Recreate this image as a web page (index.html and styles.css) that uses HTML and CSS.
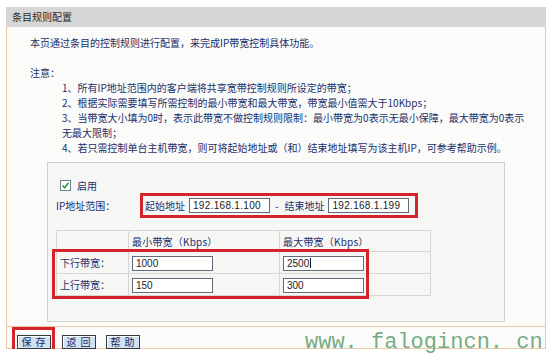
FILE: index.html
```html
<!DOCTYPE html>
<html>
<head>
    <meta charset="UTF-8">
    <title>条目规则配置</title>
    <link rel="stylesheet" href="styles.css">
</head>
<body>
    <div class="frame">
        <div class="title">条目规则配置</div>
        <div class="content">
            <p class="intro">本页通过条目的控制规则进行配置，来完成IP带宽控制具体功能。</p>
            <p class="note">注意：</p>
            <ul class="notes">
                <li>1、所有IP地址范围内的客户端将共享宽带控制规则所设定的带宽；</li>
                <li>2、根据实际需要填写所需控制的最小带宽和最大带宽，带宽最小值需大于10Kbps；</li>
                <li>3、当带宽大小填为0时，表示此带宽不做控制规则限制：最小带宽为0表示无最小保障，最大带宽为0表示<br>无最大限制；</li>
                <li>4、若只需控制单台主机带宽，则可将起始地址或（和）结束地址填写为该主机IP，可参考帮助示例。</li>
            </ul>
            <div class="panel">
                <div class="enable">
                    <span class="check">
                        <svg width="9" height="9" viewBox="0 0 9 9"><path d="M1.5 4.5 L3.6 6.8 L7.6 1.8" fill="none" stroke="#2f9a3a" stroke-width="1.6"/></svg>
                    </span>
                    <span>启用</span>
                </div>
                <div class="range-row">
                    <span class="range-label">IP地址范围：</span>
                    <span class="range">
                        <span class="word">起始地址</span>
                        <span class="field ip">192.168.1.100</span>
                        <span class="dash">-</span>
                        <span class="word">结束地址</span>
                        <span class="field ip">192.168.1.199</span>
                    </span>
                </div>
                <div class="bw">
                    <table>
                        <tr>
                            <th class="c1"></th>
                            <th class="c2">最小带宽（Kbps）</th>
                            <th class="c3">最大带宽（Kbps）</th>
                        </tr>
                        <tr>
                            <td class="c1">下行带宽：</td>
                            <td class="c2"><span class="field num">1000</span></td>
                            <td class="c3"><span class="field num">2500<i class="caret"></i></span></td>
                        </tr>
                        <tr>
                            <td class="c1">上行带宽：</td>
                            <td class="c2"><span class="field num">150</span></td>
                            <td class="c3"><span class="field num">300</span></td>
                        </tr>
                    </table>
                    <div class="mark-rows"></div>
                </div>
            </div>
        </div>
        <div class="actions">
            <span class="mark-save"><span class="btn">保 存</span></span>
            <span class="btn">返 回</span>
            <span class="btn">帮 助</span>
        </div>
    </div>
    <div class="watermark">www.&nbsp;falogincn.&nbsp;cn</div>
</body>
</html>
```

FILE: styles.css
```css
body{margin:0;background:#ffffff;font-family:"Noto Sans CJK SC", sans-serif;font-size:10px;color:#22306a;}
p{margin:0;}
ul,li{margin:0;padding:0;list-style:none;}

.frame{
    width: 540px;
    margin: 7px 0 0 6px;
}

.title{
    height: 20px;
    line-height: 20px;
    padding-left: 6px;
    background-color: #d6d6d6;
    color: #2a2a2a;
}

.content{
    padding: 8px 0 4px 0;
    background-color: #fbfbfa;
    border-left: 1px solid #e6cba3;
    border-right: 1px solid #e6cba3;
}
.intro{
    margin-left: 23px;
    line-height: 15px;
}
.note{
    margin: 15px 0 0 23px;
    line-height: 15px;
}
.notes{
    margin-left: 55px;
    line-height: 15px;
}

.panel{
    margin: 7px 0 0 40px;
    width: 458px;
    height: 160px;
    padding: 15px 0 0 8px;
    box-sizing: border-box;
    background-color: #f6f6f5;
    border: 1px solid #cfcfcf;
}

.enable{
    display: flex;
    align-items: center;
    height: 15px;
    padding-left: 4px;
}
.check{
    display: flex;
    align-items: center;
    justify-content: center;
    width: 9px;
    height: 9px;
    margin-right: 6px;
    background-color: #ffffff;
    border: 1px solid #6f7f8f;
}

.range-row{
    display: flex;
    align-items: center;
}
.range-label{
    width: 84px;
    flex-shrink: 0;
}
.range{
    display: flex;
    align-items: center;
    flex-shrink: 0;
    height: 25px;
    width: 278px;
    padding-left: 2px;
    box-sizing: border-box;
    border: 3px solid #d4232b;
    white-space: nowrap;
}
.range .word{
    flex-shrink: 0;
}
.range .field{
    flex-shrink: 0;
    margin: 0 5px 0 4px;
}
.dash{
    margin-right: 6px;
}

.field{
    display: inline-block;
    height: 15px;
    width: 81px;
    padding-left: 3px;
    box-sizing: border-box;
    line-height: 13px;
    background-color: #ffffff;
    border: 1px solid #5f6b76;
    font-family: "Liberation Sans", sans-serif;
    font-size: 10px;
    color: #1a1a1a;
}
.ip{
    letter-spacing: 0.3px;
}
.caret{
    display: inline-block;
    width: 1px;
    height: 10px;
    margin-left: 1px;
    vertical-align: -1px;
    background-color: #222;
}

.bw{
    position: relative;
    margin-top: 12px;
}
.bw table{
    border-collapse: collapse;
    width: 375px;
}
.bw th, .bw td{
    padding: 0 0 0 3px;
    border: 1px solid #d6d6d6;
    text-align: left;
    font-weight: normal;
}
.bw th{
    height: 20px;
    letter-spacing: 0.2px;
}
.bw td{
    height: 21px;
}
.bw .c1{
    width: 68px;
}
.bw .c2{
    width: 147px;
}
.mark-rows{
    position: absolute;
    left: -4px;
    top: 19px;
    width: 317px;
    height: 50px;
    border: 3px solid #d4232b;
    box-sizing: border-box;
}

.actions{
    display: flex;
    align-items: flex-start;
    height: 23px;
    padding-left: 5px;
    background-color: #fbfbfa;
    border: 1px solid #e6cba3;
    box-sizing: border-box;
}
.mark-save{
    display: flex;
    width: 43px;
    height: 27px;
    padding: 5px 0 0 2px;
    margin-right: 7px;
    box-sizing: border-box;
    border: 3px solid #d4232b;
}
.btn{
    display: inline-block;
    width: 34px;
    height: 14px;
    margin: 8px 10px 0 0;
    line-height: 12px;
    text-align: center;
    box-sizing: border-box;
    background-color: #d0e1f2;
    border: 1px solid #3a3a3a;
    box-shadow: inset 1px 1px #ffffff;
    letter-spacing: 1px;
    white-space: pre;
    color: #1d2b63;
}
.mark-save .btn{
    margin: 0;
}

.watermark{
    position: absolute;
    left: 305px;
    top: 332px;
    font-family: "Liberation Mono", monospace;
    font-size: 22px;
    line-height: 22px;
    color: rgba(80, 150, 100, 0.8);
    white-space: nowrap;
}
```
